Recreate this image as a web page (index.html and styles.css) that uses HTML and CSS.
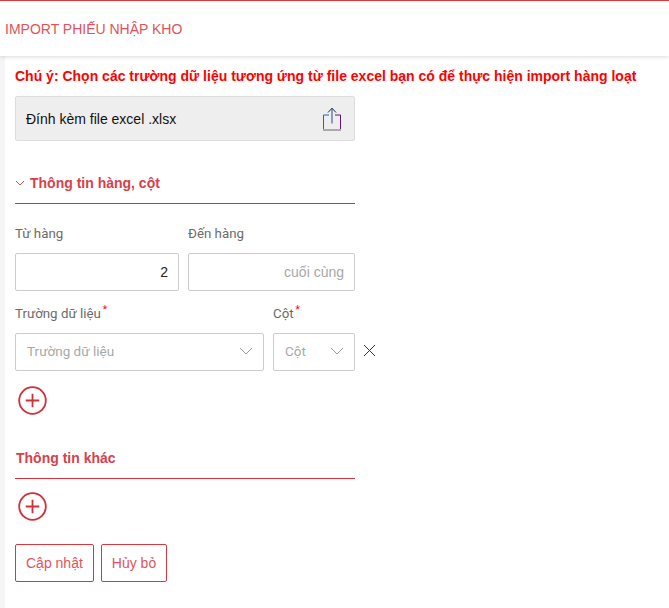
FILE: index.html
```html
<!DOCTYPE html>
<html lang="vi">
<head>
<meta charset="utf-8">
<title>Import phiếu nhập kho</title>
<link rel="stylesheet" href="styles.css">
</head>
<body>
<header class="topbar"><h1 class="topbar-title">IMPORT PHIẾU NHẬP KHO</h1></header>
<main class="page">
  <p class="notice">Chú ý: Chọn các trường dữ liệu tương ứng từ file excel bạn có để thực hiện import hàng loạt</p>
  <div class="column">
    <div class="attach">
      <span>Đính kèm file excel .xlsx</span>
      <svg class="share" width="20" height="24" viewBox="0 0 20 24" fill="none">
        <path d="M7 8H1.5V23" stroke="#0b6fb8"/>
        <path d="M13 8H18.5V23" stroke="#6a0f80"/>
        <path d="M1 23H19" stroke="#aaa" stroke-width="2"/>
        <path d="M10 16.5V1.5" stroke="#2a4a80"/>
        <path d="M6 5.5L10 1.2L14 5.5" stroke="#1f2a50"/>
      </svg>
    </div>
    <div class="section-head first">
      <svg class="caret" width="10" height="6" viewBox="0 0 10 6" fill="none"><path d="M1 1L5 5L9 1" stroke="#d9534f" stroke-width="1"/></svg>
      <h2 class="section-title">Thông tin hàng, cột</h2>
    </div>
    <div class="row-range">
      <div class="field">
        <label class="label">Từ hàng</label>
        <div class="box value">2</div>
      </div>
      <div class="field">
        <label class="label">Đến hàng</label>
        <div class="box placeholder end">cuối cùng</div>
      </div>
    </div>
    <div class="row-map">
      <div class="field grow">
        <label class="label">Trường dữ liệu<sup class="req">*</sup></label>
        <div class="box select placeholder">Trường dữ liệu
          <svg class="chev" width="14" height="8" viewBox="0 0 14 8" fill="none"><path d="M1 1L7 7L13 1" stroke="#999"/></svg>
        </div>
      </div>
      <div class="field col">
        <label class="label">Cột<sup class="req">*</sup></label>
        <div class="box select placeholder">Cột
          <svg class="chev" width="14" height="8" viewBox="0 0 14 8" fill="none"><path d="M1 1L7 7L13 1" stroke="#999"/></svg>
        </div>
      </div>
      <svg class="close" width="13" height="13" viewBox="0 0 13 13" fill="none"><path d="M1 1L12 12M12 1L1 12" stroke="#333"/></svg>
    </div>
    <svg class="add add-one" width="30" height="31" viewBox="0 0 30 31" fill="none">
      <circle cx="15.5" cy="15.5" r="13.3" stroke="#d32f3a" stroke-width="1.8"/>
      <path d="M8.7 15.5H22.3M15.5 8.7V22.3" stroke="#d32f3a" stroke-width="1.8"/>
    </svg>
    <div class="section-head second">
      <h2 class="section-title">Thông tin khác</h2>
    </div>
    <svg class="add add-two" width="30" height="31" viewBox="0 0 30 31" fill="none">
      <circle cx="15.5" cy="15.5" r="13.3" stroke="#d32f3a" stroke-width="1.8"/>
      <path d="M8.7 15.5H22.3M15.5 8.7V22.3" stroke="#d32f3a" stroke-width="1.8"/>
    </svg>
    <div class="actions">
      <button class="btn" type="button">Cập nhật</button>
      <button class="btn" type="button">Hủy bỏ</button>
    </div>
  </div>
</main>
</body>
</html>
```
FILE: styles.css
```css
* { box-sizing: border-box; }
html, body { margin: 0; height: 100%; }
body {
  font-family: "Liberation Sans", Arial, sans-serif;
  font-size: 14px;
  background: #f5f5f5;
  overflow: hidden;
}
.topbar {
  height: 56px;
  background: #fff;
  border-top: 1px solid #d9363e;
  box-shadow: 0 1px 4px rgba(0,0,0,.15);
  display: flex;
  align-items: center;
  padding-left: 5px;
  position: relative;
}
.topbar-title {
  margin: 0;
  font-size: 14px;
  font-weight: 400;
  color: #e0545a;
}
.page {
  margin-left: 5px;
  height: 552px;
  background: #fff;
  padding: 0 10px;
}
.notice {
  margin: 0;
  padding-top: 12px;
  height: 40px;
  font-size: 14px;
  font-weight: 700;
  color: #f00;
  white-space: nowrap;
  line-height: 17px;
}
.column { width: 340px; }
.attach {
  height: 45px;
  background: #eee;
  border: 1px solid #ddd;
  border-radius: 2px;
  display: flex;
  align-items: center;
  justify-content: space-between;
  padding: 0 12px 0 10px;
  color: #111;
}
.section-head {
  display: flex;
  align-items: center;
  gap: 5px;
  border-bottom: 1px solid #d32f3a;
}
.section-head.first { margin-top: 26px; height: 37px; padding-bottom: 4px; }
.section-head.second { margin-top: 16px; height: 47px; padding-top: 5px; }
.section-title {
  margin: 0;
  font-size: 14px;
  font-weight: 700;
  color: #d9404a;
}
.second .section-title { margin-left: 1px; }
.row-range { display: flex; gap: 9px; margin-top: 20px; }
.row-range .field { flex: 1; }
.row-range .field:first-child { flex: 0 0 164px; }
.row-map { display: flex; gap: 9px; margin-top: 13px; position: relative; }
.field { display: flex; flex-direction: column; }
.grow { flex: 1; }
.col { flex: 0 0 82px; }
.label {
  color: #6b6b6b;
  font-family: Roboto, "Liberation Sans", sans-serif;
  font-size: 13.3px;
  line-height: 20px;
  margin-bottom: 9px;
}
.req { color: #f00; font-size: 10px; line-height: 0; margin-left: 2px; }
.box {
  height: 38px;
  border: 1px solid #ccc;
  border-radius: 2px;
  background: #fff;
  display: flex;
  align-items: center;
  padding: 0 10px;
}
.value { justify-content: flex-end; color: #222; }
.placeholder { color: #a8a8a8; }
.end { justify-content: flex-end; }
.select {
  justify-content: space-between;
  padding: 0 10px 2px 11px;
  font-family: Roboto, "Liberation Sans", sans-serif;
  font-size: 13.5px;
}
.close { position: absolute; left: 348px; top: 40px; }
.add { display: block; }
.add-one { margin: 14px 0 0 2px; }
.add-two { margin: 12px 0 0 2px; }
.actions { display: flex; gap: 7px; margin-top: 22px; }
.btn {
  height: 38px;
  padding: 0 10px;
  background: #fff;
  border: 1px solid #d9363e;
  border-radius: 2px;
  color: #e0545a;
  font: inherit;
}
```
